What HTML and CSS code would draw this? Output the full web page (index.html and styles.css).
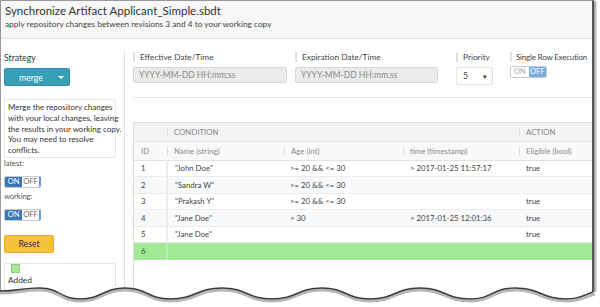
FILE: index.html
```html
<!DOCTYPE html>
<html lang="en">
<head>
    <meta charset="UTF-8">
    <meta name="viewport" content="width=device-width, initial-scale=1.0">
    <title>Synchronize Artifact</title>
    <link rel="stylesheet" href="styles.css">
</head>
<body>
    <div class="window">
        <header class="title-bar">
            <h1>Synchronize Artifact Applicant_Simple.sbdt</h1>
            <p>apply repository changes between revisions 3 and 4 to your working copy</p>
        </header>

        <div class="content">
            <aside class="sidebar">
                <div class="label">Strategy</div>
                <button class="merge-button"><span>merge</span><span class="caret"></span></button>
                <div class="description">Merge the repository changes<br>with your local changes, leaving<br>the results in your working copy.<br>You may need to resolve<br>conflicts.</div>
                <div class="small-label">latest:</div>
                <div class="switch"><span class="switch-on active">ON</span><span class="switch-off">OFF</span></div>
                <div class="small-label working">working:</div>
                <div class="switch"><span class="switch-on active">ON</span><span class="switch-off">OFF</span></div>
                <button class="reset-button">Reset</button>
                <div class="legend">
                    <span class="swatch"></span>
                    <div class="legend-text">Added</div>
                </div>
            </aside>

            <main class="main">
                <div class="fields">
                    <div class="field field-effective">
                        <div class="field-label">Effective Date/Time</div>
                        <div class="date-input">YYYY-MM-DD HH:mm:ss</div>
                    </div>
                    <div class="field field-expiration">
                        <div class="field-label">Expiration Date/Time</div>
                        <div class="date-input">YYYY-MM-DD HH:mm:ss</div>
                    </div>
                    <div class="field field-priority">
                        <div class="field-label">Priority</div>
                        <div class="select"><span>5</span><span class="select-caret">&#9662;</span></div>
                    </div>
                    <div class="field field-single">
                        <div class="field-label">Single Row Execution</div>
                        <div class="switch switch-light"><span class="switch-on">ON</span><span class="switch-off active">OFF</span></div>
                    </div>
                </div>

                <div class="divider"></div>

                <div class="grid-wrap">
                    <table class="grid">
                        <colgroup>
                            <col class="col-id">
                            <col class="col-name">
                            <col class="col-age">
                            <col class="col-time">
                            <col class="col-eligible">
                        </colgroup>
                        <thead>
                            <tr class="group-row">
                                <th></th>
                                <th colspan="3" class="sep">CONDITION</th>
                                <th class="sep">ACTION</th>
                            </tr>
                            <tr class="name-row">
                                <th>ID</th>
                                <th class="sep">Name (string)</th>
                                <th class="sep">Age (int)</th>
                                <th class="sep">time (timestamp)</th>
                                <th class="sep">Eligible (bool)</th>
                            </tr>
                        </thead>
                        <tbody>
                            <tr><td>1</td><td>"John Doe"</td><td>&gt;= 20 &amp;&amp; &lt;= 30</td><td>&gt; 2017-01-25 11:57:17</td><td>true</td></tr>
                            <tr class="alt"><td>2</td><td>"Sandra W"</td><td>&gt;= 20 &amp;&amp; &lt;= 30</td><td></td><td></td></tr>
                            <tr><td>3</td><td>"Prakash Y"</td><td>&gt;= 20 &amp;&amp; &lt;= 30</td><td></td><td>true</td></tr>
                            <tr class="alt"><td>4</td><td>"Jane Doe"</td><td>&gt; 30</td><td>&gt; 2017-01-25 12:01:36</td><td>true</td></tr>
                            <tr><td>5</td><td>"Jane Doe"</td><td></td><td></td><td>true</td></tr>
                            <tr class="added"><td>6</td><td></td><td></td><td></td><td></td></tr>
                        </tbody>
                    </table>
                </div>
            </main>
        </div>

        <!-- torn bottom edge of the screenshot -->
        <svg class="torn" width="600" height="307" viewBox="0 0 600 307">
            <path d="M0,291 C20,291 20,288 40,288 C60,288 60,299 80,299 C102,299 103,288 125,288 C147,288 148,299 170,299 C196,299 196,288 222,288 C247,288 247,299 272,299 C297,299 297,288 322,288 C346,288 346,299 370,299 C395,299 395,288 420,288 C445,288 445,299 470,299 C492,299 492,288 515,288 C541,288 541,299 567,299 C580,299 584,295 593,292 L600,292 L600,307 L0,307 Z" fill="#fff"/>
            <path d="M0,293 C20,293 20,290 40,290 C60,290 60,301 80,301 C102,301 103,290 125,290 C147,290 148,301 170,301 C196,301 196,290 222,290 C247,290 247,301 272,301 C297,301 297,290 322,290 C346,290 346,301 370,301 C395,301 395,290 420,290 C445,290 445,301 470,301 C492,301 492,290 515,290 C541,290 541,301 567,301 C580,301 584,297 595,294" fill="none" stroke="#999" stroke-width="3" opacity="0.7"/>
            <path d="M0,291 C20,291 20,288 40,288 C60,288 60,299 80,299 C102,299 103,288 125,288 C147,288 148,299 170,299 C196,299 196,288 222,288 C247,288 247,299 272,299 C297,299 297,288 322,288 C346,288 346,299 370,299 C395,299 395,288 420,288 C445,288 445,299 470,299 C492,299 492,288 515,288 C541,288 541,299 567,299 C580,299 584,295 593,292" fill="none" stroke="#3c3c3c" stroke-width="1.4"/>
        </svg>
    </div>
</body>
</html>
```

FILE: styles.css
```css
* {
    margin: 0;
    padding: 0;
    box-sizing: border-box;
    font-family: 'Lato', 'Liberation Sans', sans-serif;
}
body {
    background-color: #fff;
    color: #333;
    width: 600px;
    height: 307px;
    overflow: hidden;
    position: relative;
}
.window {
    width: 594px;
    height: 307px;
    border: 1px solid #9a9a9a;
    border-right: 2px solid #555;
    border-bottom: none;
    box-shadow: 2px 1px 2px rgba(0, 0, 0, 0.4);
    background-color: #fff;
    display: flex;
    flex-direction: column;
    overflow: hidden;
}
.title-bar {
    background-color: #f7f7f7;
    border-bottom: 1px solid #e2e2e2;
    padding: 2px 4px 6px;
    height: 38px;
}
.title-bar h1 {
    font-size: 11.5px;
    font-weight: normal;
    line-height: 15px;
    color: #333;
}
.title-bar p {
    font-size: 8.3px;
    line-height: 11px;
    margin-top: 1px;
    color: #444;
}
.content {
    flex: 1;
    display: flex;
}
.sidebar {
    width: 124px;
    margin-top: 12px;
    border-right: 1px solid #e3e3e3;
    padding: 1px 8px 0 3px;
}
.label {
    font-size: 8.7px;
    line-height: 11px;
    color: #333;
}
.merge-button {
    display: flex;
    align-items: center;
    width: 66px;
    height: 18px;
    margin-top: 5px;
    background-color: #37a0b8;
    border: 1px solid #2f8ea5;
    border-radius: 2px;
    color: white;
    font-size: 8.7px;
    padding: 0 5px 0 14px;
}
.merge-button span:first-child {
    flex-grow: 1;
    text-align: left;
}
.caret {
    width: 0;
    height: 0;
    border-left: 3px solid transparent;
    border-right: 3px solid transparent;
    border-top: 3px solid white;
}
.description {
    margin-top: 13px;
    border: 1px solid #e6e6e6;
    border-radius: 2px;
    padding: 2px 3px 1px;
    font-size: 8px;
    line-height: 10.8px;
    color: #333;
    white-space: nowrap;
}
.small-label {
    font-size: 7.5px;
    line-height: 10px;
    color: #555;
    margin-top: 1px;
}
.small-label.working {
    margin-top: 4px;
}
.switch {
    display: flex;
    width: 37px;
    height: 12px;
    margin-top: 7px;
    border: 1px solid #c8c8c8;
    border-right: 2px solid #6d9bd0;
    border-radius: 2px;
    overflow: hidden;
    font-size: 7.5px;
    line-height: 10px;
}
.switch span {
    flex: 1;
    text-align: center;
    color: #666;
    background-color: #fff;
}
.switch .active {
    background-color: #3a77b8;
    color: white;
}
.switch-light {
    border-right: 1px solid #c8c8c8;
    margin-top: 4px;
}
.switch-light span {
    color: #aaa;
}
.switch-light .active {
    background-color: #79acdf;
    color: white;
}
.reset-button {
    display: block;
    width: 50px;
    height: 18px;
    margin-top: 14px;
    background-color: #f8c13a;
    border: 1px solid #e8ab1f;
    border-radius: 2px;
    font-size: 8.7px;
    color: #333;
}
.legend {
    margin-top: 10px;
    border: 1px solid #e6e6e6;
    border-radius: 2px;
    height: 40px;
    padding: 0 3px;
}
.swatch {
    display: block;
    width: 9px;
    height: 9px;
    margin-left: 3px;
    background-color: #a6ea98;
    border: 1px solid #8fcf82;
}
.legend-text {
    font-size: 8.3px;
    line-height: 11px;
    margin-top: 2px;
}
.main {
    flex: 1;
    display: flex;
    flex-direction: column;
    padding-top: 13px;
    padding-left: 8px;
    overflow: hidden;
}
.fields {
    display: flex;
}
.field-label {
    font-size: 8.3px;
    line-height: 10px;
    color: #444;
    border-left: 2px solid #e0e0e0;
    padding-left: 5px;
    white-space: nowrap;
}
.field-effective {
    width: 154px;
    margin-right: 8px;
}
.field-expiration {
    width: 143px;
    margin-right: 18px;
}
.field-priority {
    width: 37px;
    margin-right: 17px;
}
.field-single {
    flex: 1;
}
.field-single .field-label {
    font-size: 8px;
    letter-spacing: -0.2px;
    padding-left: 4px;
}
.date-input {
    margin-top: 5px;
    height: 16px;
    background-color: #ebebeb;
    border: 1px solid #d6d6d6;
    border-radius: 2px;
    padding-left: 5px;
    font-size: 8.5px;
    line-height: 14px;
    color: #8a8a8a;
    white-space: nowrap;
}
.select {
    margin-top: 5px;
    height: 18px;
    display: flex;
    align-items: center;
    justify-content: space-between;
    border: 1px solid #e2e2e2;
    border-radius: 2px;
    padding: 0 5px 0 6px;
    font-size: 8.5px;
    color: #444;
}
.select-caret {
    font-size: 7px;
    color: #333;
}
.divider {
    margin-top: 12px;
    border-top: 1px solid #e6e6e6;
}
.grid-wrap {
    flex: 1;
    margin-top: 24px;
    border-left: 1px solid #dcdcdc;
    border-top: 1px solid #dcdcdc;
    width: 470px;
}
.grid {
    border-collapse: collapse;
    table-layout: fixed;
    width: 470px;
    font-size: 7.8px;
    color: #444;
}
.col-id { width: 33px; }
.col-name { width: 117px; }
.col-age { width: 119px; }
.col-time { width: 116px; }
.col-eligible { width: 85px; }
.grid th {
    font-weight: normal;
    text-align: left;
    color: #888;
    padding-left: 7px;
    position: relative;
    white-space: nowrap;
}
.grid th.sep::before {
    content: '';
    position: absolute;
    left: 0;
    top: 5px;
    bottom: 5px;
    width: 1px;
    background-color: #ddd;
}
.group-row th {
    height: 18px;
    background-color: #f4f4f4;
    border-bottom: 1px solid #e2e2e2;
}
.name-row th {
    height: 19px;
    background-color: #f9f9f9;
    border-bottom: 1px solid #e2e2e2;
}
.grid td {
    height: 16.5px;
    padding-left: 7px;
    border-bottom: 1px solid #ececec;
    white-space: nowrap;
}
.grid td:first-child {
    border-right: 2px solid #ececec;
}
.grid td:nth-child(3) {
    padding-left: 6px;
}
.grid tr.alt td {
    background-color: #f8f9fb;
}
.grid tr.added td {
    background-color: #a2e996;
    border-bottom-color: #a2e996;
}
.grid tr.added td:first-child {
    border-right-color: #b9efae;
}
.torn {
    position: absolute;
    left: 0;
    top: 0;
    pointer-events: none;
}
```
